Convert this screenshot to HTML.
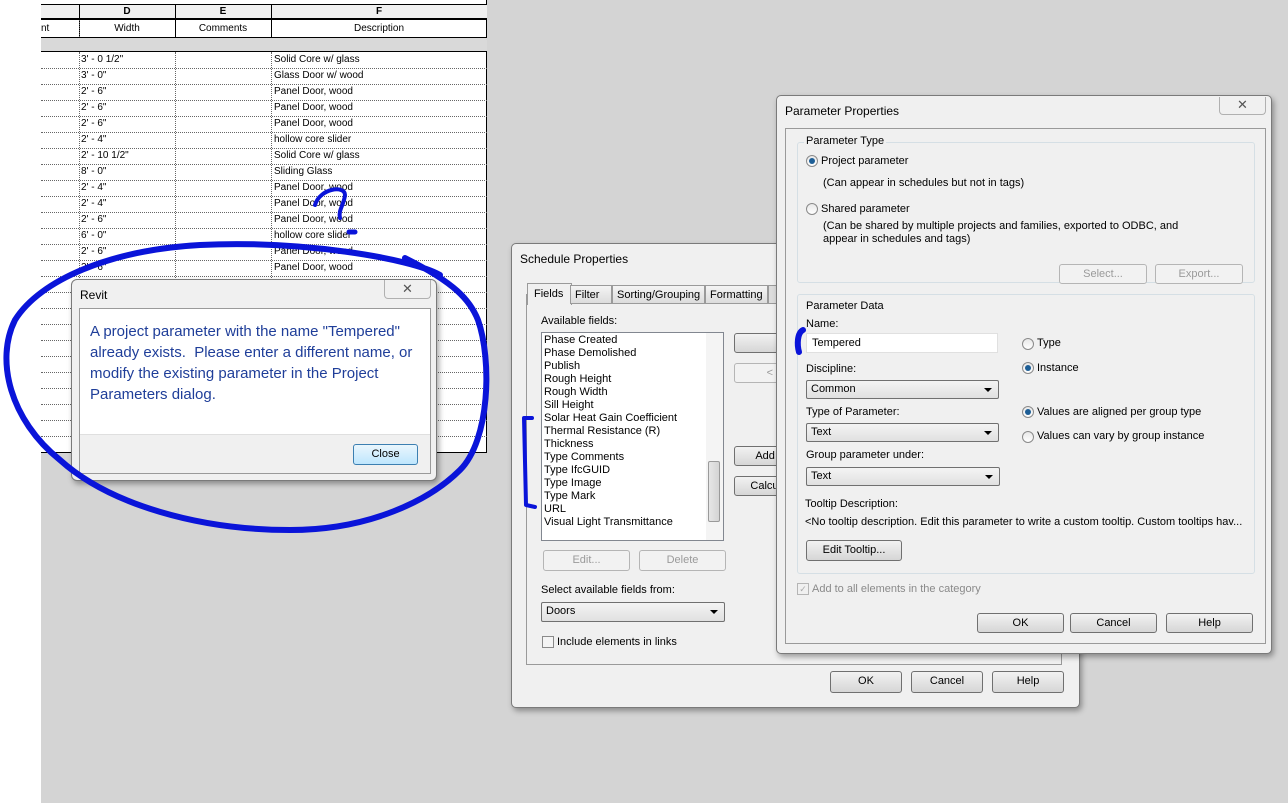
<!DOCTYPE html>
<html><head><meta charset="utf-8"><style>
*{box-sizing:border-box;margin:0;padding:0}
body{width:1288px;height:803px;overflow:hidden;background:#d4d4d4;position:relative;font-family:"Liberation Sans",sans-serif;font-size:11px;color:#000}
.a{position:absolute}
.tbl{left:41px;top:0;width:446px;height:453px;background:#fff;border-right:1px solid #000;border-bottom:1px solid #000}
.cell{position:absolute;font-size:10px;line-height:16px;white-space:nowrap}
.hl{position:absolute;left:0;width:446px;border-top:1px dotted #666}
.vl{position:absolute;top:20px;bottom:0;border-left:1px dotted #666}
.dlg{background:#f0f0f0;border:1px solid #7a7a7a;border-radius:5px;box-shadow:2px 3px 6px rgba(0,0,0,.35)}
.btn{position:absolute;border:1px solid #707070;border-radius:3px;background:linear-gradient(#f2f2f2,#e4e4e4 50%,#d6d6d6);text-align:center;line-height:18px;font-size:11px}
.dis{color:#9a9a9a;border-color:#b5b5b5;background:#f2f2f2}
.sel{position:absolute;border:1px solid #707070;border-radius:2px;background:linear-gradient(#f4f4f4,#e0e0e0);height:19px;line-height:17px;padding-left:4px;font-size:11px}
.sel:after{content:"";position:absolute;right:6px;top:7px;border:4px solid transparent;border-top:4px solid #000;border-bottom:0}
.rad{position:absolute;width:12px;height:12px;border-radius:50%;border:1px solid #8a8a8a;background:linear-gradient(#e8e8e8,#fff)}
.rad.on:after{content:"";position:absolute;left:2px;top:2px;width:6px;height:6px;border-radius:50%;background:#1d5e96}
.grp{position:absolute;border:1px solid #d5dfe5;border-radius:3px}
</style></head><body>
<div class="a" style="left:0;top:0;width:41px;height:803px;background:#fff"></div>
<div class="a tbl">
 <div class="a" style="left:0;top:0;width:446px;height:5px;border-bottom:1px solid #000"></div>
 <div class="a" style="left:0;top:5px;width:446px;height:15px;background:#f0f0f0;border-bottom:2px solid #000"></div>
 <div class="a" style="left:0;top:37px;width:446px;height:15px;background:#d9d9d9;border-top:1px solid #000;border-bottom:1px solid #000"></div>
 <div class="a" style="left:38px;top:5px;height:32px;border-left:1px solid #000"></div>
 <div class="a" style="left:134px;top:5px;height:32px;border-left:1px solid #000"></div>
 <div class="a" style="left:230px;top:5px;height:32px;border-left:1px solid #000"></div>
 <div class="vl" style="left:38px;top:20px;height:17px"></div>
 <div class="vl" style="left:38px;top:52px"></div><div class="vl" style="left:134px;top:52px"></div><div class="vl" style="left:230px;top:52px"></div>
 <div class="cell" style="left:38px;width:96px;text-align:center;top:4px;font-weight:bold">D</div>
 <div class="cell" style="left:134px;width:96px;text-align:center;top:4px;font-weight:bold">E</div>
 <div class="cell" style="left:230px;width:216px;text-align:center;top:4px;font-weight:bold">F</div>
 <div class="cell" style="left:0;top:21px">nt</div>
 <div class="cell" style="left:38px;width:96px;text-align:center;top:21px">Width</div>
 <div class="cell" style="left:134px;width:96px;text-align:center;top:21px">Comments</div>
 <div class="cell" style="left:230px;width:216px;text-align:center;top:21px">Description</div>
 <div id="rows"></div>
</div>
<script>
var d=[["3' - 0 1/2\"","Solid Core w/ glass"],["3' - 0\"","Glass Door w/ wood"],["2' - 6\"","Panel Door, wood"],["2' - 6\"","Panel Door, wood"],["2' - 6\"","Panel Door, wood"],["2' - 4\"","hollow core slider"],["2' - 10 1/2\"","Solid Core w/ glass"],["8' - 0\"","Sliding Glass"],["2' - 4\"","Panel Door, wood"],["2' - 4\"","Panel Door, wood"],["2' - 6\"","Panel Door, wood"],["6' - 0\"","hollow core slider"],["2' - 6\"","Panel Door, wood"],["2' - 6\"","Panel Door, wood"]];
var h="";for(var i=0;i<25;i++){var t=52+16*i;if(i>0)h+='<div class="hl" style="top:'+t+'px"></div>';if(d[i]){h+='<div class="cell" style="left:40px;top:'+t+'px">'+d[i][0]+'</div><div class="cell" style="left:233px;top:'+t+'px">'+d[i][1]+'</div>';}}
document.getElementById("rows").innerHTML=h;
</script>

<!-- Schedule Properties -->
<div class="a dlg" style="left:511px;top:243px;width:569px;height:465px">
 <div class="a" style="left:8px;top:8px;font-size:12px">Schedule Properties</div>
 <div class="a" style="left:14px;top:50px;width:536px;height:371px;border:1px solid #9a9a9a;background:#f0f0f0"></div>
 <div class="a" style="left:15px;top:39px;width:45px;height:22px;background:#f0f0f0;border:1px solid #9a9a9a;border-bottom:none;padding:4px 0 0 6px">Fields</div>
 <div class="a" style="left:58px;top:41px;width:42px;height:19px;border:1px solid #9a9a9a;background:linear-gradient(#f4f4f4,#dcdcdc);padding:3px 4px">Filter</div>
 <div class="a" style="left:100px;top:41px;width:93px;height:19px;border:1px solid #9a9a9a;background:linear-gradient(#f4f4f4,#dcdcdc);padding:3px 4px">Sorting/Grouping</div>
 <div class="a" style="left:193px;top:41px;width:63px;height:19px;border:1px solid #9a9a9a;background:linear-gradient(#f4f4f4,#dcdcdc);padding:3px 4px">Formatting</div>
 <div class="a" style="left:256px;top:41px;width:10px;height:19px;border:1px solid #9a9a9a;background:#dcdcdc"></div>
 <div class="a" style="left:29px;top:71px">Available fields:</div>
 <div class="a" style="left:29px;top:88px;width:183px;height:209px;background:#fff;border:1px solid #828790"></div>
 <div class="a" style="left:32px;top:90px;line-height:13px">Phase Created<br>Phase Demolished<br>Publish<br>Rough Height<br>Rough Width<br>Sill Height<br>Solar Heat Gain Coefficient<br>Thermal Resistance (R)<br>Thickness<br>Type Comments<br>Type IfcGUID<br>Type Image<br>Type Mark<br>URL<br>Visual Light Transmittance</div>
 <div class="a" style="left:194px;top:89px;width:17px;height:207px;background:#f4f4f4"></div>
 <div class="a" style="left:196px;top:217px;width:12px;height:61px;background:linear-gradient(90deg,#e6e6e6,#d4d4d4);border:1px solid #9a9a9a;border-radius:2px"></div>
 <div class="btn dis" style="left:31px;top:306px;width:87px;height:21px">Edit...</div>
 <div class="btn dis" style="left:127px;top:306px;width:87px;height:21px">Delete</div>
 <div class="a" style="left:29px;top:340px">Select available fields from:</div>
 <div class="sel" style="left:29px;top:358px;width:184px;height:20px">Doors</div>
 <div class="a" style="left:30px;top:392px;width:12px;height:12px;border:1px solid #8a8a8a;background:#f4f4f4"></div>
 <div class="a" style="left:45px;top:392px">Include elements in links</div>
 <div class="btn" style="left:222px;top:89px;width:50px;height:20px"></div>
 <div class="btn dis" style="left:222px;top:119px;width:50px;height:20px;text-align:right;padding-right:10px">&lt;</div>
 <div class="btn" style="left:222px;top:202px;width:50px;height:20px;text-align:right;padding-right:2px">Add I</div>
 <div class="btn" style="left:222px;top:232px;width:50px;height:20px;text-align:right;padding-right:2px">Calcul</div>
 <div class="btn" style="left:318px;top:427px;width:72px;height:22px">OK</div>
 <div class="btn" style="left:399px;top:427px;width:72px;height:22px">Cancel</div>
 <div class="btn" style="left:480px;top:427px;width:72px;height:22px">Help</div>
</div>

<!-- Parameter Properties -->
<div class="a dlg" style="left:776px;top:95px;width:496px;height:559px">
 <div class="a" style="left:8px;top:8px;font-size:12px">Parameter Properties</div>
 <div class="a" style="left:442px;top:1px;width:47px;height:18px;border:1px solid #b0b0b0;border-top:none;border-radius:0 0 4px 4px;text-align:center;color:#555;font-size:13px;line-height:16px">✕</div>
 <div class="a" style="left:8px;top:32px;width:481px;height:516px;border:1px solid #9a9a9a"></div>
 <div class="grp" style="left:20px;top:46px;width:458px;height:141px"></div>
 <div class="a" style="left:27px;top:39px;background:#f0f0f0;padding:0 2px">Parameter Type</div>
 <div class="rad on" style="left:29px;top:59px"></div><div class="a" style="left:44px;top:59px">Project parameter</div>
 <div class="a" style="left:46px;top:81px">(Can appear in schedules but not in tags)</div>
 <div class="rad" style="left:29px;top:107px"></div><div class="a" style="left:44px;top:107px">Shared parameter</div>
 <div class="a" style="left:46px;top:124px;line-height:13px">(Can be shared by multiple projects and families, exported to ODBC, and<br>appear in schedules and tags)</div>
 <div class="btn dis" style="left:282px;top:168px;width:88px;height:20px">Select...</div>
 <div class="btn dis" style="left:378px;top:168px;width:88px;height:20px">Export...</div>
 <div class="grp" style="left:20px;top:198px;width:458px;height:280px"></div>
 <div class="a" style="left:27px;top:204px;background:#f0f0f0;padding:0 2px">Parameter Data</div>
 <div class="a" style="left:29px;top:222px">Name:</div>
 <div class="a" style="left:29px;top:237px;width:192px;height:20px;background:#fff;border:1px solid #e0e0e0;padding:3px 5px">Tempered</div>
 <div class="a" style="left:29px;top:267px">Discipline:</div>
 <div class="sel" style="left:29px;top:284px;width:193px">Common</div>
 <div class="a" style="left:29px;top:310px">Type of Parameter:</div>
 <div class="sel" style="left:29px;top:327px;width:193px">Text</div>
 <div class="a" style="left:29px;top:353px">Group parameter under:</div>
 <div class="sel" style="left:29px;top:371px;width:194px">Text</div>
 <div class="a" style="left:28px;top:402px">Tooltip Description:</div>
 <div class="a" style="left:28px;top:420px;white-space:nowrap">&lt;No tooltip description. Edit this parameter to write a custom tooltip. Custom tooltips hav...</div>
 <div class="btn" style="left:29px;top:444px;width:96px;height:21px">Edit Tooltip...</div>
 <div class="rad" style="left:245px;top:242px"></div><div class="a" style="left:260px;top:241px">Type</div>
 <div class="rad on" style="left:245px;top:266px"></div><div class="a" style="left:260px;top:266px">Instance</div>
 <div class="rad on" style="left:245px;top:310px"></div><div class="a" style="left:260px;top:310px">Values are aligned per group type</div>
 <div class="rad" style="left:245px;top:335px"></div><div class="a" style="left:260px;top:334px">Values can vary by group instance</div>
 <div class="a" style="left:20px;top:487px;width:12px;height:12px;border:1px solid #b5b5b5;color:#aaa;font-size:9px;line-height:10px;text-align:center">✓</div>
 <div class="a" style="left:35px;top:487px;color:#8a8a8a">Add to all elements in the category</div>
 <div class="btn" style="left:200px;top:517px;width:87px;height:20px">OK</div>
 <div class="btn" style="left:293px;top:517px;width:87px;height:20px">Cancel</div>
 <div class="btn" style="left:389px;top:517px;width:87px;height:20px">Help</div>
</div>

<!-- Revit dialog -->
<div class="a dlg" style="left:71px;top:279px;width:366px;height:202px;background:#f0f0f0;border-radius:6px">
 <div class="a" style="left:8px;top:8px;font-size:12px">Revit</div>
 <div class="a" style="left:312px;top:0;width:47px;height:19px;border:1px solid #b0b0b0;border-top:none;border-radius:0 0 4px 4px;text-align:center;color:#555;font-size:13px;line-height:17px">✕</div>
 <div class="a" style="left:7px;top:28px;width:352px;height:166px;border:1px solid #9a9a9a;background:#fff"></div>
 <div class="a" style="left:8px;top:154px;width:350px;height:39px;background:#f0f0f0;border-top:1px solid #dfdfdf"></div>
 <div class="a" style="left:18px;top:41px;width:345px;font-size:15px;line-height:21px;color:#1f3e99">A project parameter with the name "Tempered" already exists.&nbsp; Please enter a different name, or modify the existing parameter in the Project Parameters dialog.</div>
 <div class="btn" style="left:281px;top:164px;width:65px;height:21px;border-color:#3c7fb1;background:linear-gradient(#eaf6fd,#bee6fd)">Close</div>
</div>

<svg class="a" style="left:0;top:0" width="1288" height="803">
 <g fill="none" stroke="#0a14d9" stroke-linecap="round" stroke-linejoin="round">
  <path d="M440 275 C 410 258, 300 240, 200 245 C 110 250, 40 280, 15 320 C -5 360, 10 420, 60 460 C 110 505, 200 530, 290 530 C 370 530, 430 500, 460 470 C 490 440, 492 360, 478 320 C 470 300, 455 283, 405 258" stroke-width="6"/>
  <path d="M315 205 C 320 188, 345 185, 345 195 C 344 205, 338 210, 340 218" stroke-width="4"/>
  <path d="M349 232 L 355 232" stroke-width="5"/>
  <path d="M532 418 L 524 418 L 526 505 L 535 507" stroke-width="4"/>
  <path d="M803 330 C 797 333, 797 345, 799 352" stroke-width="6"/>
 </g>
</svg>
</body></html>
